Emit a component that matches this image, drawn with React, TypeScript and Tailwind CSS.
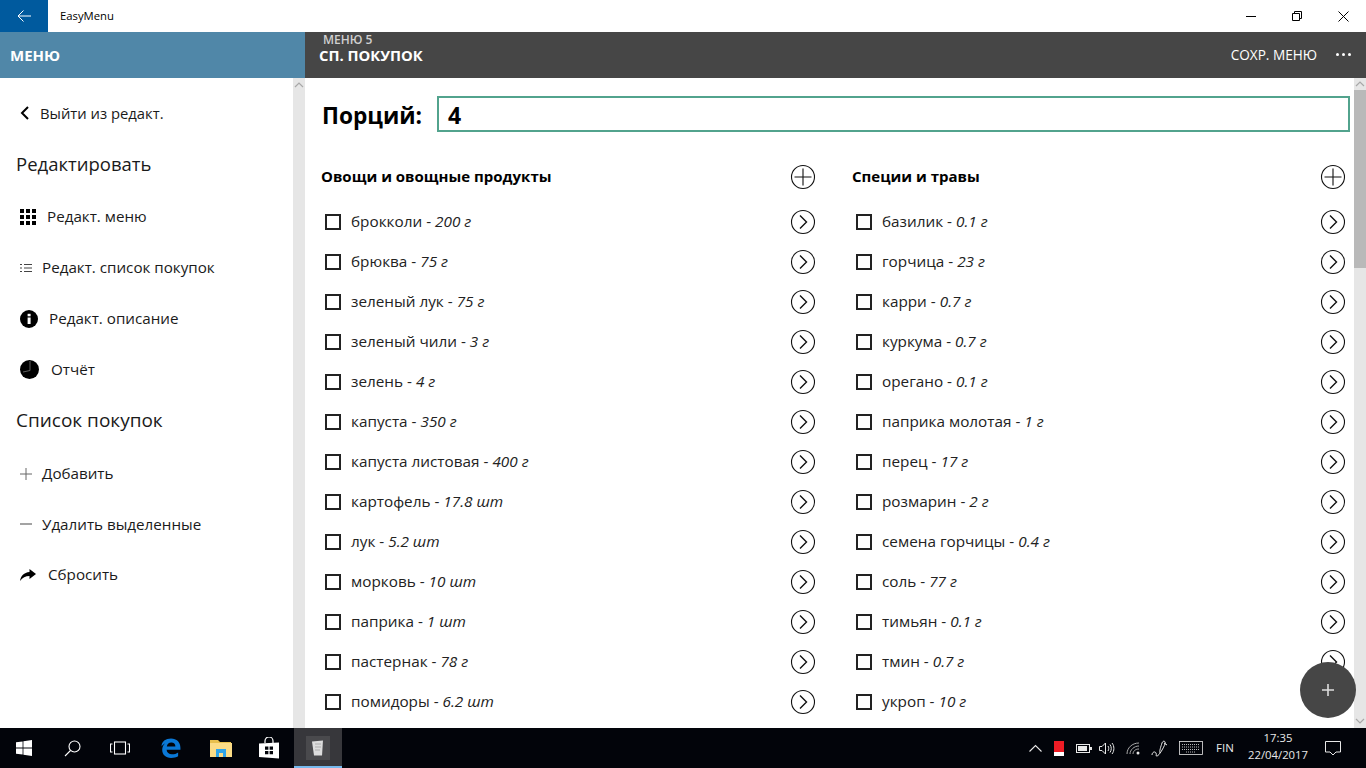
import React from "react";

const left: [string, string][] = [
  ["брокколи", "200 г"], ["брюква", "75 г"], ["зеленый лук", "75 г"], ["зеленый чили", "3 г"], ["зелень", "4 г"],
  ["капуста", "350 г"], ["капуста листовая", "400 г"], ["картофель", "17.8 шт"], ["лук", "5.2 шт"], ["морковь", "10 шт"],
  ["паприка", "1 шт"], ["пастернак", "78 г"], ["помидоры", "6.2 шт"],
];
const right: [string, string][] = [
  ["базилик", "0.1 г"], ["горчица", "23 г"], ["карри", "0.7 г"], ["куркума", "0.7 г"], ["орегано", "0.1 г"],
  ["паприка молотая", "1 г"], ["перец", "17 г"], ["розмарин", "2 г"], ["семена горчицы", "0.4 г"], ["соль", "77 г"],
  ["тимьян", "0.1 г"], ["тмин", "0.7 г"], ["укроп", "10 г"],
];

const font = "[font-family:'Open_Sans','Noto_Sans',sans-serif]";

function CircleBtn({ plus }: { plus?: boolean }) {
  return (
    <svg width="26" height="26" viewBox="0 0 26 26" fill="none" stroke="#111" strokeWidth="1.1" className="shrink-0">
      <circle cx="13" cy="13" r="11.5" />
      {plus ? <path d="M13 4.5v17M4.5 13h17" /> : <path d="M10 6.5l6.5 6.5-6.5 6.5" strokeWidth="1.4" />}
    </svg>
  );
}

function Column({ title, items, className }: { title: string; items: [string, string][]; className: string }) {
  return (
    <div className={className}>
      <div className="flex h-[40px] items-center justify-between">
        <span className="-translate-y-[1px] text-[15px] font-bold text-black">{title}</span>
        <CircleBtn plus />
      </div>
      <div className="flex flex-col pt-[5px]">
        {items.map(([n, q]) => (
          <div key={n} className="flex h-[40px] items-center justify-between">
            <div className="flex items-center">
              <span className="ml-[4px] mr-[10px] box-border h-[16px] w-[16px] border-2 border-[#222]" />
              <span className="-translate-y-[1px] text-[15.3px] text-[#222]">
                {n} - <i>{q}</i>
              </span>
            </div>
            <CircleBtn />
          </div>
        ))}
      </div>
    </div>
  );
}

function NavItem({ icon, label, gap, h = 51 }: { icon: React.ReactNode; label: string; gap: string; h?: number }) {
  return (
    <div className="flex items-center pl-[20px] text-[15.2px] text-[#1a1a1a]" style={{ height: h }}>
      <span className={`flex items-center ${gap}`}>{icon}</span>
      <span>{label}</span>
    </div>
  );
}

function ScrollChevron({ up }: { up?: boolean }) {
  return (
    <svg width="10" height="6" viewBox="0 0 10 6" fill="none" stroke="#a8a8a8" strokeWidth="1.2">
      <path d={up ? "M1 5l4-4 4 4" : "M1 1l4 4 4-4"} />
    </svg>
  );
}

export default function App() {
  return (
    <div className={`relative flex h-[768px] w-[1366px] flex-col overflow-hidden bg-white ${font}`}>
      {/* title bar */}
      <div className="flex h-[32px] shrink-0 items-center bg-white">
        <div className="flex h-[32px] w-[48px] items-center justify-center bg-[#005a9e]">
          <svg width="16" height="14" viewBox="0 0 16 14" fill="none" stroke="#fff" strokeWidth="1">
            <path d="M15 7H2M7.5 1.5L2 7l5.5 5.5" />
          </svg>
        </div>
        <span className="ml-[12px] text-[11.3px] text-black">EasyMenu</span>
        <div className="ml-auto flex items-center">
          <div className="flex h-[32px] w-[46px] items-center justify-center">
            <svg width="10" height="10" viewBox="0 0 10 10" stroke="#000" strokeWidth="1"><path d="M0 5.5h10" /></svg>
          </div>
          <div className="flex h-[32px] w-[46px] items-center justify-center">
            <svg width="10" height="10" viewBox="0 0 10 10" fill="none" stroke="#000" strokeWidth="1"><path d="M.5 2.5h7v7h-7zM2.5 2.5v-2h7v7h-2" /></svg>
          </div>
          <div className="flex h-[32px] w-[46px] items-center justify-center">
            <svg width="11" height="11" viewBox="0 0 11 11" stroke="#000" strokeWidth="1"><path d="M.5.5l10 10M10.5.5l-10 10" /></svg>
          </div>
        </div>
      </div>

      {/* header */}
      <div className="flex h-[46px] shrink-0">
        <div className="flex w-[305px] items-center bg-[#5087a8] pl-[10px] text-[15px] font-bold text-white">МЕНЮ</div>
        <div className="flex flex-1 items-center justify-between bg-[#464646] pl-[14px] pr-[15px] text-white">
          <div className="flex flex-col self-start pt-[2px]">
            <span className="ml-[4px] text-[12px] font-semibold leading-[12px] text-[#d0d0d0]">МЕНЮ 5</span>
            <span className="text-[14.8px] font-bold leading-[18px]">СП. ПОКУПОК</span>
          </div>
          <div className="flex items-center">
            <span className="text-[13.6px]">СОХР. МЕНЮ</span>
            <span className="ml-[19px] flex gap-[3px]">
              <span className="h-[3px] w-[3px] rounded-full bg-white" />
              <span className="h-[3px] w-[3px] rounded-full bg-white" />
              <span className="h-[3px] w-[3px] rounded-full bg-white" />
            </span>
          </div>
        </div>
      </div>

      {/* body */}
      <div className="flex min-h-0 flex-1">
        {/* sidebar */}
        <div className="flex w-[293px] shrink-0 flex-col pt-[10px]">
          <div className="flex h-[50px] items-center pl-[20px] text-[14.8px] text-[#1a1a1a]">
            <svg width="10" height="14" viewBox="0 0 10 14" fill="none" stroke="#000" strokeWidth="2" className="mr-[10px]"><path d="M8 1L2 7l6 6" /></svg>
            Выйти из редакт.
          </div>
          <div className="flex h-[52px] items-center pl-[16px] text-[18.5px] text-[#1a1a1a]">Редактировать</div>
          <div className="flex flex-col pt-[1px]">
            <NavItem label="Редакт. меню" gap="mr-[11px]" icon={
              <svg width="16" height="16" viewBox="0 0 16 16" fill="#000">
                {[0, 6, 12].map((x) => [0, 6, 12].map((y) => <rect key={`${x}${y}`} x={x} y={y} width="4" height="4" />))}
              </svg>
            } />
            <NavItem label="Редакт. список покупок" gap="mr-[10px]" icon={
              <svg width="12" height="10" viewBox="0 0 12 10" stroke="#444" strokeWidth="1"><path d="M0 1.5h2M4 1.5h8M0 5h2M4 5h8M0 8.5h2M4 8.5h8" /></svg>
            } />
            <NavItem label="Редакт. описание" gap="mr-[11px]" icon={
              <svg width="18" height="18" viewBox="0 0 18 18"><circle cx="9" cy="9" r="9" fill="#000" /><rect x="7.6" y="7.5" width="3" height="6.5" fill="#fff" /><rect x="7.6" y="3.8" width="3" height="2.5" fill="#fff" /></svg>
            } />
            <NavItem label="Отчёт" gap="mr-[12px]" h={50} icon={
              <svg width="19" height="19" viewBox="0 0 19 19"><circle cx="9.5" cy="9.5" r="9.5" fill="#000" /><path d="M10 1v9.5L3 12" fill="none" stroke="#777" strokeWidth="0.8" /></svg>
            } />
          </div>
          <div className="flex h-[52px] items-center pl-[16px] text-[19px] text-[#1a1a1a]">Список покупок</div>
          <div className="flex flex-col pt-[2px]">
            <NavItem label="Добавить" gap="mr-[10px]" icon={
              <svg width="12" height="12" viewBox="0 0 12 12" stroke="#666" strokeWidth="1"><path d="M6 0v12M0 6h12" /></svg>
            } />
            <NavItem label="Удалить выделенные" gap="mr-[10px]" h={50} icon={
              <svg width="12" height="12" viewBox="0 0 12 12" stroke="#666" strokeWidth="1.2"><path d="M0 6h12" /></svg>
            } />
            <NavItem label="Сбросить" gap="mr-[12px]" icon={
              <svg width="16" height="12" viewBox="0 0 16 12" fill="#000"><path d="M9.5 0L16 5l-6.5 5V7C5.5 7 2.5 8.5 0 12c.7-5 4-8.5 9.5-9z" /></svg>
            } />
          </div>
        </div>
        {/* sidebar scrollbar */}
        <div className="flex w-[12px] shrink-0 justify-center bg-[#e6e6e6] pt-[4px]">
          <ScrollChevron up />
        </div>

        {/* main */}
        <div className="flex min-w-0 flex-1 flex-col overflow-hidden">
          <div className="flex h-[79px] shrink-0 items-start pl-[17px] pr-[4px] pt-[18px]">
            <span className="mr-[15px] h-[36px] text-[22.7px] font-bold leading-[40px] text-black">Порций:</span>
            <div className="flex h-[36px] flex-1 items-center border-2 border-[#52a38d] pl-[9px] text-[23px] font-bold leading-[34px] text-black">
              <span className="translate-y-[1px]">4</span>
            </div>
          </div>
          <div className="flex">
            <Column title="Овощи и овощные продукты" items={left} className="ml-[16px] w-[495px] shrink-0" />
            <Column title="Специи и травы" items={right} className="ml-[36px] w-[494px] shrink-0" />
          </div>
        </div>

        {/* main scrollbar */}
        <div className="flex w-[12px] shrink-0 flex-col items-center justify-between bg-[#e6e6e6] pb-[4px]">
          <div className="flex w-full flex-col items-center">
            <div className="flex h-[12px] items-center justify-center"><ScrollChevron up /></div>
            <div className="h-[178px] w-full bg-[#b9b9b9]" />
          </div>
          <ScrollChevron />
        </div>
      </div>

      {/* FAB */}
      <div className="absolute left-[1300px] top-[662px] flex h-[56px] w-[56px] items-center justify-center rounded-full bg-[#464646]">
        <svg width="12" height="12" viewBox="0 0 12 12" stroke="#ddd" strokeWidth="1.6"><path d="M6 0v12M0 6h12" /></svg>
      </div>

      {/* taskbar */}
      <div className="flex h-[40px] shrink-0 items-center bg-[#02040a] text-[#e8e8e8]">
        <div className="flex h-[40px] w-[48px] items-center justify-center">
          <svg width="16" height="16" viewBox="0 0 16 16" fill="#fff"><path d="M0 2.3l6.6-.9v6.2H0zM7.4 1.3L16 0v7.6H7.4zM0 8.4h6.6v6.2L0 13.7zM7.4 8.4H16V16l-8.6-1.2z" /></svg>
        </div>
        <div className="flex h-[40px] w-[48px] items-center justify-center">
          <svg width="17" height="17" viewBox="0 0 17 17" fill="none" stroke="#fff" strokeWidth="1.1"><circle cx="10.5" cy="6.5" r="5.5" /><path d="M6.5 10.5L1 16" /></svg>
        </div>
        <div className="flex h-[40px] w-[48px] items-center justify-center">
          <svg width="20" height="14" viewBox="0 0 20 14" fill="none" stroke="#fff" strokeWidth="1.1"><rect x="4.5" y="1" width="11" height="12" /><path d="M2.5 3H.5v8h2M17.5 3h2v8h-2" /></svg>
        </div>
        <div className="flex h-[40px] w-[53px] items-center justify-center">
          <svg width="22" height="22" viewBox="0 0 21 21" fill="none">
            <path d="M10.5 1.5c5.500 0 9 3.600 9 8.700v2H6.300c.2 2.800 2.300 4.300 5 4.300 2.300 0 4.500-.7 6-1.800v3.700c-1.700 1-4 1.600-6.700 1.600-5.400 0-8.500-3.300-8.500-7.800 0-2.500 1-4.600 2.600-6-1.200.5-2.500 1.700-3.200 2.800C1.500 4.300 5.500 1.500 10.500 1.500zM6.500 9h8.200c0-2.300-1.500-3.700-3.900-3.700-2.300 0-3.900 1.500-4.300 3.700z" fill="#0a78d7" />
          </svg>
        </div>
        <div className="flex h-[40px] w-[47px] items-center justify-center">
          <svg width="22" height="18" viewBox="0 0 22 18">
            <path d="M0 1h8l2 2h11v3H0z" fill="#e8c04e" />
            <rect x="0" y="4" width="22" height="14" fill="#fbdc86" />
            <path d="M6 10h10v8h-3v-4H9v4H6z" fill="#2fa4e8" />
          </svg>
        </div>
        <div className="flex h-[40px] w-[50px] items-center justify-center">
          <svg width="22" height="23" viewBox="0 0 22 23">
            <path d="M7 6V4a4 4 0 018 0v2" fill="none" stroke="#fff" strokeWidth="1.2" />
            <path d="M1 6.500L21 5.500v16L1 20z" fill="#fff" />
            <path d="M7 9.500h3.400v3.300H7zM11.600 9.500H15v3.300h-3.400zM7 14h3.400v3.300H7zM11.600 14H15v3.300h-3.400z" fill="#02040a" />
          </svg>
        </div>
        <div className="flex h-[40px] w-[48px] flex-col items-center justify-between bg-[#37373b]">
          <div className="mt-[8px] flex h-[24px] w-[24px] items-center justify-center bg-[#4a4a4d]">
            <svg width="12" height="16" viewBox="0 0 12 16"><path d="M0 1.500L11 .5 10 15.500H2z" fill="#dcdcdc" /><path d="M3 4h6M3 7h6M3 10h5" stroke="#9a9a9a" strokeWidth="0.7" /></svg>
          </div>
          <div className="h-[2px] w-full bg-[#76b9ed]" />
        </div>

        <div className="ml-auto flex items-center">
          <svg width="13" height="8" viewBox="0 0 13 8" fill="none" stroke="#e8e8e8" strokeWidth="1.100" className="mr-[12px]"><path d="M.5 7.500l6-6 6 6" /></svg>
          <div className="mr-[12px] flex h-[15px] w-[10px] flex-col">
            <div className="h-[11px] bg-[#ee1c25]" />
            <div className="h-[4px] bg-white" />
          </div>
          <svg width="16" height="9" viewBox="0 0 16 9" className="mr-[7px]"><rect x=".5" y=".5" width="13" height="8" fill="none" stroke="#e8e8e8" /><rect x="2" y="2" width="9" height="5" fill="#e8e8e8" /><rect x="14" y="3" width="2" height="3" fill="#e8e8e8" /></svg>
          <svg width="16" height="13" viewBox="0 0 16 13" fill="none" stroke="#e8e8e8" strokeWidth="1" className="mr-[11px]"><path d="M.5 4.500h2.500L6.500 1v11L3 8.500H.5zM9 4c1 1.500 1 3.500 0 5M11 2.500c1.700 2.500 1.700 5.500 0 8M13 1c2.500 3 2.500 8 0 11" /></svg>
          <svg width="15" height="13" viewBox="0 0 15 13" fill="none" stroke="#aaa" strokeWidth="1" className="mr-[10px]"><path d="M1 12C1 6 6 1 13 1M4 12c0-4 4-8 9-8M7 12c0-2.500 2-5 6-5" /><circle cx="12" cy="11" r="1.500" fill="#e8e8e8" stroke="none" /></svg>
          <svg width="18" height="17" viewBox="0 0 18 17" fill="none" stroke="#e8e8e8" strokeWidth="1" className="mr-[10px]"><path d="M1 15c0-3 3-4 4-2s-1 3 1 3c2 0 7-9 8-12s-2-4-3-1-3 9-2 10M13 3l3 2" /></svg>
          <svg width="24" height="14" viewBox="0 0 24 14" fill="none" stroke="#e8e8e8" strokeWidth="0.8" className="mr-[13px]"><rect x=".5" y=".5" width="23" height="13" /><path d="M3 3.500h18M3 6h18M3 8.500h18M7 11h10" strokeDasharray="1 1" /></svg>
          <span className="mr-[12px] w-[20px] text-[11.5px]">FIN</span>
          <div className="mr-[17px] flex w-[60px] -translate-y-[2px] flex-col items-center text-[11.3px] leading-[17px]">
            <span>17:35</span>
            <span className="whitespace-nowrap">22/04/2017</span>
          </div>
          <svg width="16" height="15" viewBox="0 0 16 15" fill="none" stroke="#e8e8e8" strokeWidth="1" className="mr-[25px]"><path d="M.5.5h15v10.500h-4.500L8 14l-3-3H.5z" /></svg>
        </div>
      </div>
    </div>
  );
}
